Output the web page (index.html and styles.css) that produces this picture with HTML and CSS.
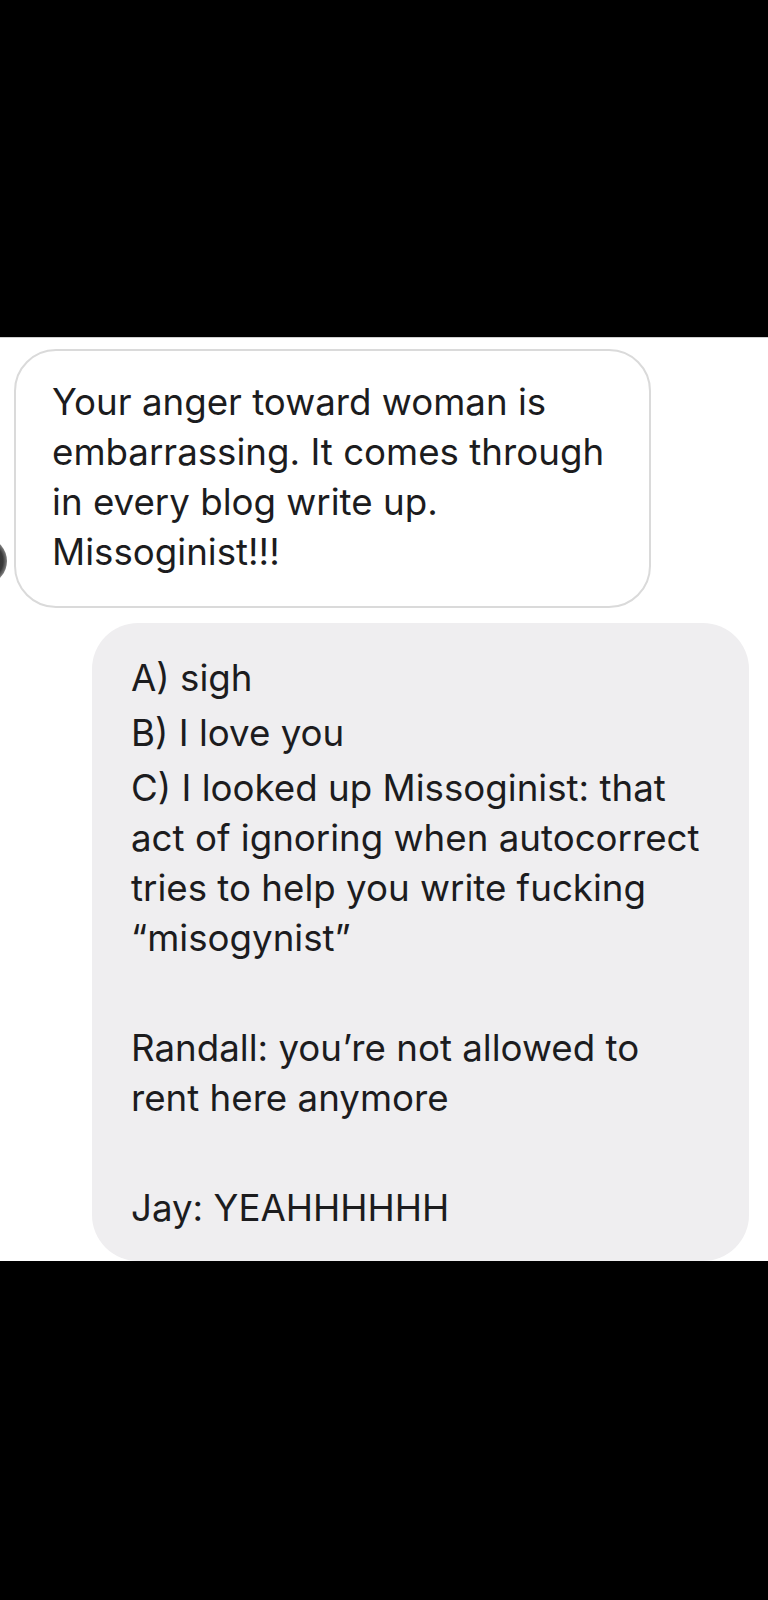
FILE: index.html
```html
<!DOCTYPE html>
<html lang="en">
<head>
    <meta charset="UTF-8">
    <meta name="viewport" content="width=device-width, initial-scale=1.0">
    <title>Messages</title>
    <link rel="stylesheet" href="styles.css">
</head>
<body>
    <div class="top-bar"></div>

    <div class="thread">
        <div class="row incoming">
            <div class="avatar"></div>
            <div class="bubble received">
                Your anger toward woman is<br>
                embarrassing. It comes through<br>
                in every blog write up.<br>
                Missoginist!!!
            </div>
        </div>

        <div class="row outgoing">
            <div class="bubble sent">
                <p>A) sigh</p>
                <p>B) I love you</p>
                <p>C) I looked up Missoginist: that<br>
                act of ignoring when autocorrect<br>
                tries to help you write fucking<br>
                &ldquo;misogynist&rdquo;</p>
                <p class="empty"></p>
                <p>Randall: you&rsquo;re not allowed to<br>
                rent here anymore</p>
                <p class="empty"></p>
                <p>Jay: YEAHHHHHH</p>
            </div>
        </div>
    </div>

    <div class="bottom-bar"></div>
</body>
</html>
```

FILE: styles.css
```css
body {
    margin: 0;
    background-color: #fff;
    font-family: "Inter", "Liberation Sans", sans-serif;
    color: #1c1c1e;
}

.top-bar {
    height: 337px;
    background-color: #000;
    border-bottom: 1px solid #cfcfcf;
}

.bottom-bar {
    height: 339px;
    background-color: #000;
}

.thread {
    display: flex;
    flex-direction: column;
    gap: 15px;
    padding-top: 11px;
    overflow: hidden;
}

.row {
    display: flex;
}

.incoming {
    align-items: flex-end;
}

.outgoing {
    justify-content: flex-end;
    padding-right: 19px;
}

.avatar {
    width: 36px;
    height: 42px;
    flex-shrink: 0;
    margin-left: -29px;
    margin-right: 7px;
    margin-bottom: 26px;
    border-radius: 50%;
    background: radial-gradient(ellipse at 50% 50%, #2b2b2b 0%, #3a3a3a 55%, rgba(80, 80, 80, 0.6) 75%, rgba(255, 255, 255, 0) 100%);
}

.bubble {
    font-size: 36.7px;
    line-height: 50px;
    white-space: nowrap;
    box-sizing: border-box;
}

.bubble p {
    margin: 0 0 5px 0;
}

.bubble p:last-child {
    margin-bottom: 0;
}

.bubble .empty {
    height: 50px;
}

.received {
    width: 637px;
    height: 259px;
    padding: 26px 20px 0 36px;
    border: 2px solid #dadada;
    border-radius: 42px;
    background-color: #fff;
}

.sent {
    width: 657px;
    height: 638px;
    padding: 30px 20px 0 39px;
    border-radius: 46px;
    background-color: #efeef0;
}
```
